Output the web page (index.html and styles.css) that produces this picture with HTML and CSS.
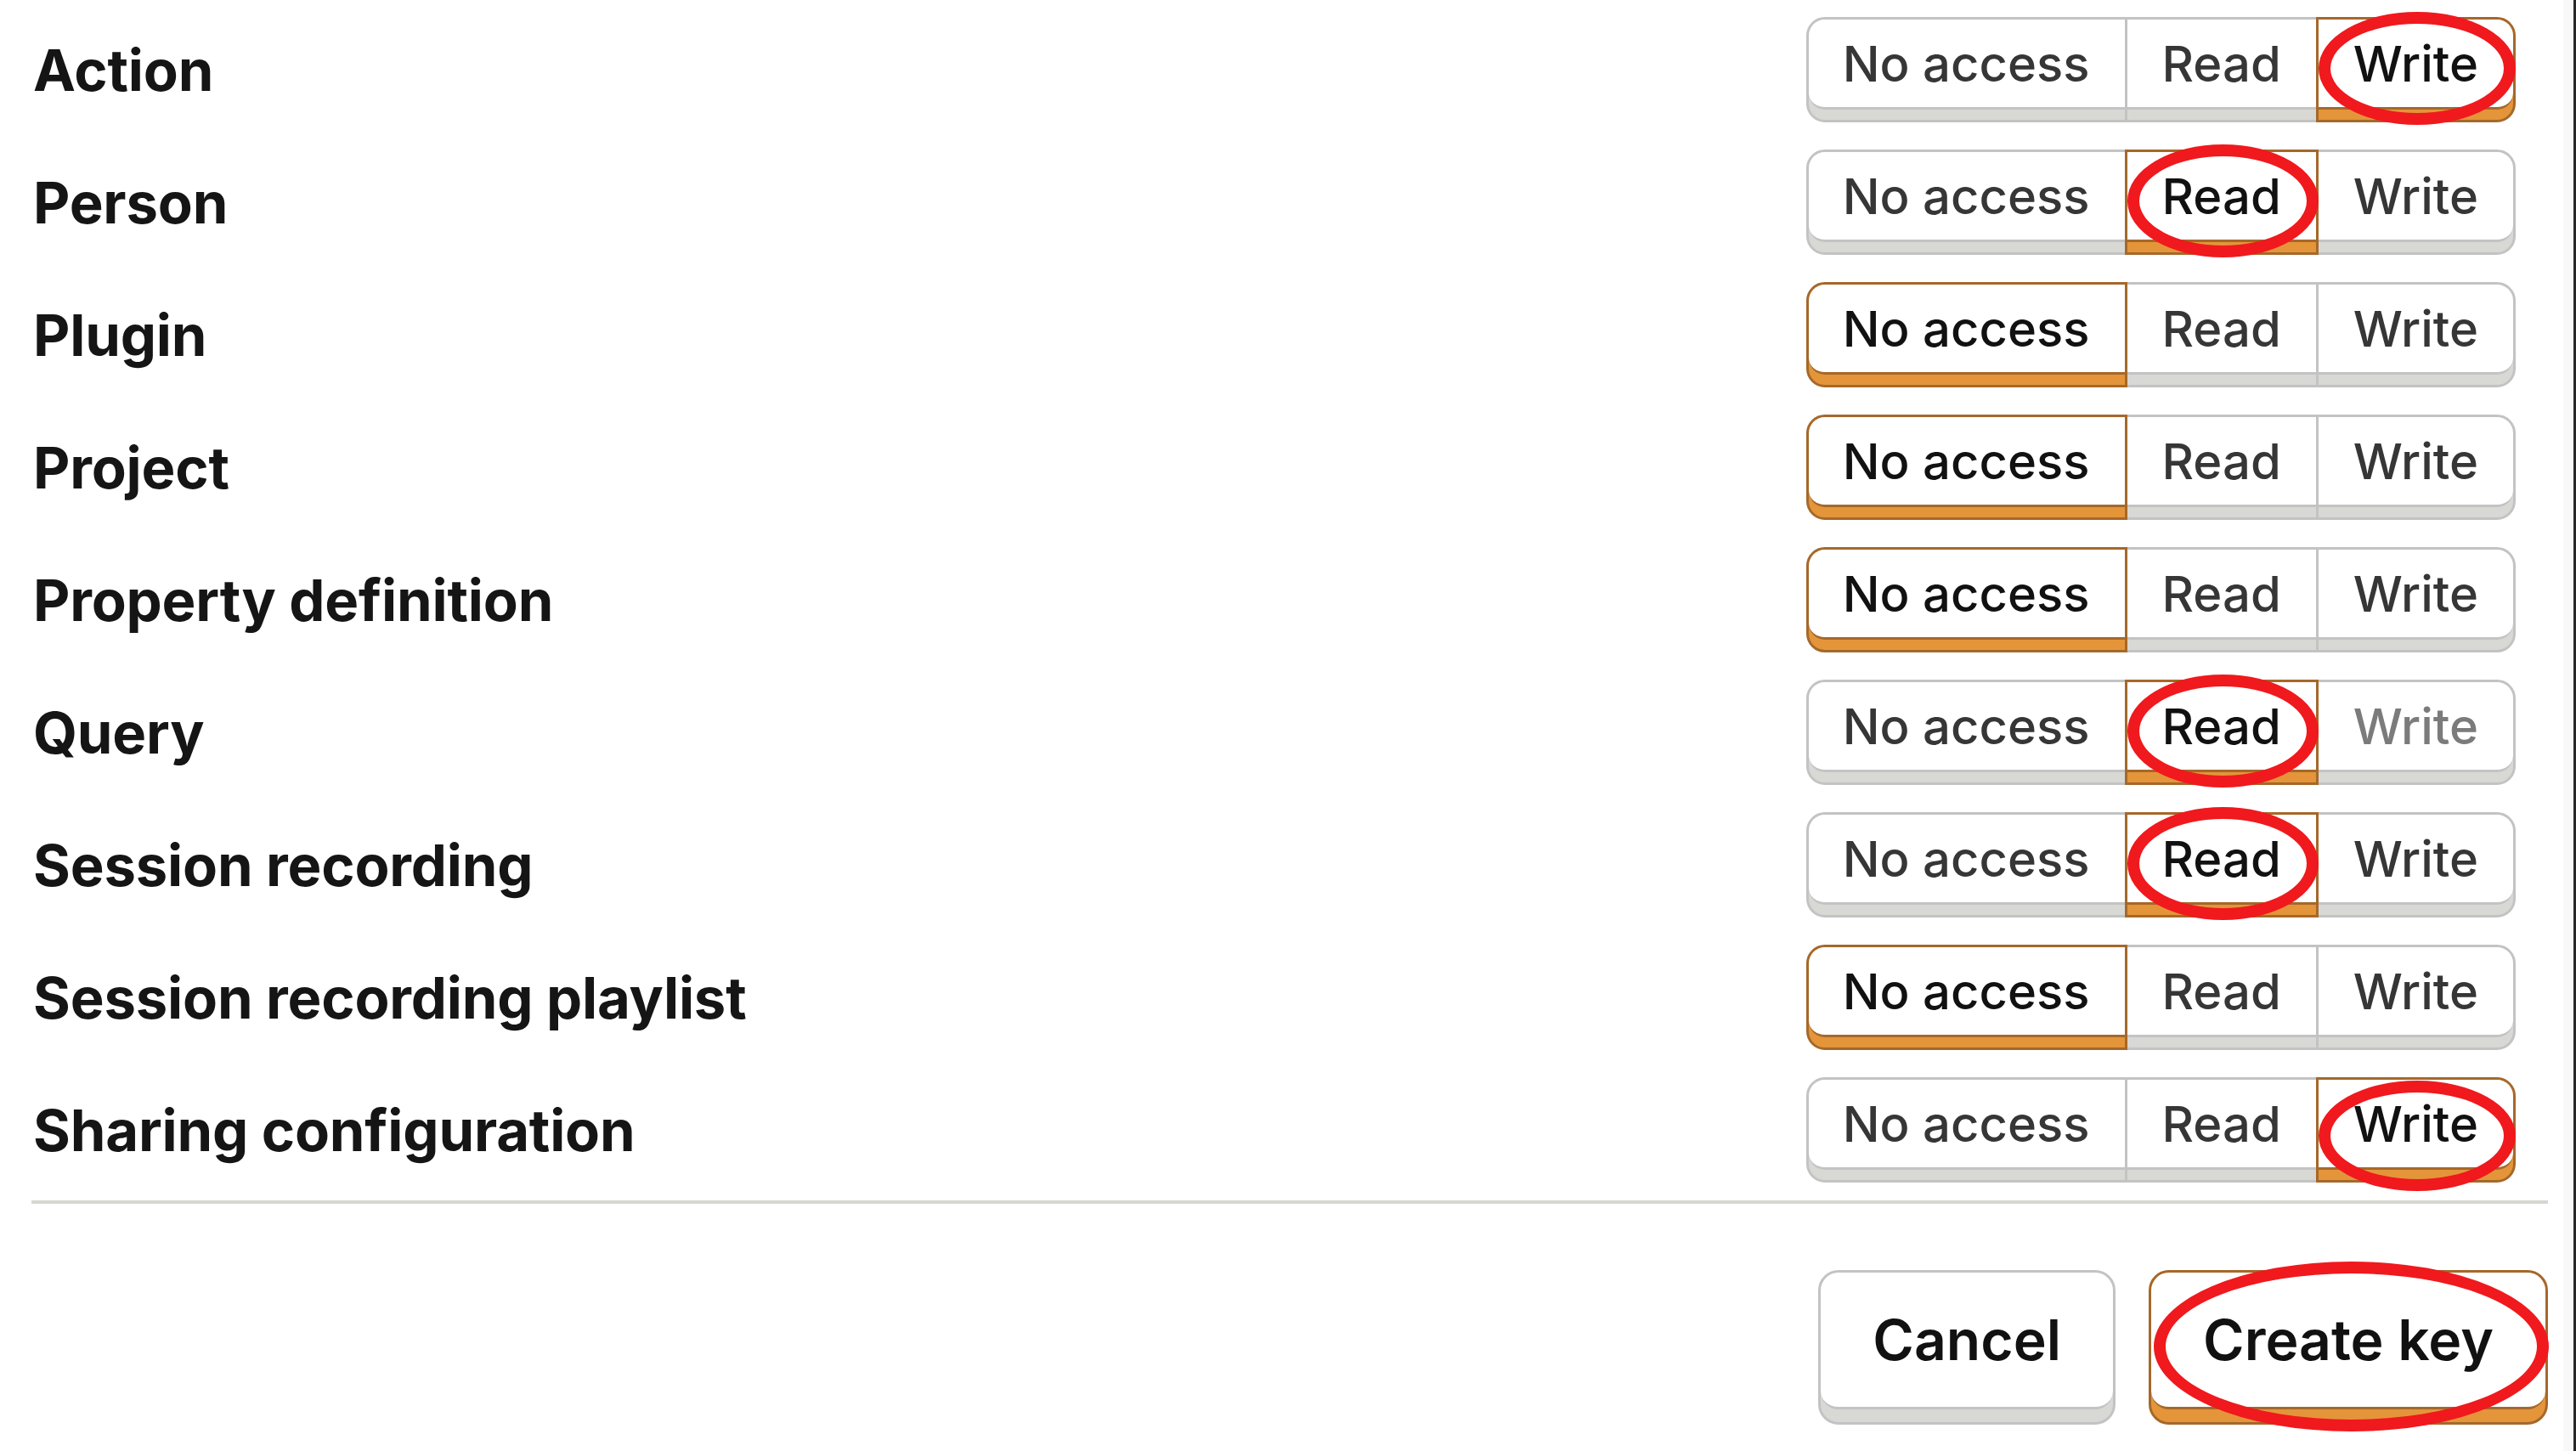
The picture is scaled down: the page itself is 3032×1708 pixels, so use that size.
FILE: index.html
```html
<!DOCTYPE html>
<html lang="en">
<head>
<meta charset="utf-8">
<title>Scopes</title>
<link rel="stylesheet" href="styles.css">
</head>
<body>
<div class="page">
  <div class="scopes">
    <div class="row">
      <span class="label">Action</span>
      <div class="seg">
        <button class="opt"><span class="face">No access</span></button>
        <button class="opt"><span class="face">Read</span></button>
        <button class="opt on"><span class="face">Write</span><span class="mark"></span></button>
      </div>
    </div>
    <div class="row">
      <span class="label">Person</span>
      <div class="seg">
        <button class="opt"><span class="face">No access</span></button>
        <button class="opt on"><span class="face">Read</span><span class="mark"></span></button>
        <button class="opt"><span class="face">Write</span></button>
      </div>
    </div>
    <div class="row">
      <span class="label">Plugin</span>
      <div class="seg">
        <button class="opt on"><span class="face">No access</span></button>
        <button class="opt"><span class="face">Read</span></button>
        <button class="opt"><span class="face">Write</span></button>
      </div>
    </div>
    <div class="row">
      <span class="label">Project</span>
      <div class="seg">
        <button class="opt on"><span class="face">No access</span></button>
        <button class="opt"><span class="face">Read</span></button>
        <button class="opt"><span class="face">Write</span></button>
      </div>
    </div>
    <div class="row">
      <span class="label">Property definition</span>
      <div class="seg">
        <button class="opt on"><span class="face">No access</span></button>
        <button class="opt"><span class="face">Read</span></button>
        <button class="opt"><span class="face">Write</span></button>
      </div>
    </div>
    <div class="row">
      <span class="label">Query</span>
      <div class="seg">
        <button class="opt"><span class="face">No access</span></button>
        <button class="opt on"><span class="face">Read</span><span class="mark"></span></button>
        <button class="opt disabled"><span class="face">Write</span></button>
      </div>
    </div>
    <div class="row">
      <span class="label">Session recording</span>
      <div class="seg">
        <button class="opt"><span class="face">No access</span></button>
        <button class="opt on"><span class="face">Read</span><span class="mark"></span></button>
        <button class="opt"><span class="face">Write</span></button>
      </div>
    </div>
    <div class="row">
      <span class="label">Session recording playlist</span>
      <div class="seg">
        <button class="opt on"><span class="face">No access</span></button>
        <button class="opt"><span class="face">Read</span></button>
        <button class="opt"><span class="face">Write</span></button>
      </div>
    </div>
    <div class="row">
      <span class="label">Sharing configuration</span>
      <div class="seg">
        <button class="opt"><span class="face">No access</span></button>
        <button class="opt"><span class="face">Read</span></button>
        <button class="opt on"><span class="face">Write</span><span class="mark mark-low"></span></button>
      </div>
    </div>
  </div>
  <div class="divider"></div>
  <div class="footer">
    <button class="btn"><span class="btn-face">Cancel</span></button>
    <button class="btn primary"><span class="btn-face">Create key</span><span class="mark mark-btn"></span></button>
  </div>
</div>
</body>
</html>
```

FILE: styles.css
```css
html, body {
  margin: 0;
  padding: 0;
  background: #ffffff;
}

body {
  font-family: "Inter", "Noto Sans", "Liberation Sans", sans-serif;
  color: #151515;
}

.page {
  box-sizing: border-box;
  width: 3032px;
  min-height: 1708px;
  padding: 0 30px 0 37px;
  border-right: 3px solid #262626;
  box-shadow: inset -12px 0 0 #f8f8f8;
}

.scopes {
  display: flex;
  flex-direction: column;
  padding: 4px 38px 0 2px;
}

.row {
  height: 156px;
  display: flex;
  align-items: center;
  justify-content: space-between;
}

.label {
  font-size: 67px;
  font-weight: 700;
  color: #151515;
  letter-spacing: -0.2px;
}

.seg {
  display: flex;
}

.opt {
  position: relative;
  display: flex;
  flex-direction: column;
  margin: 0 0 0 -3px;
  padding: 0 0 12px 0;
  border: 3px solid #c3c3c3;
  background: #d8d8d4;
  font-family: inherit;
  cursor: pointer;
}

.opt:first-child {
  margin-left: 0;
  border-radius: 22px 0 0 22px;
}

.opt:last-child {
  border-radius: 0 22px 22px 0;
}

.face {
  box-sizing: border-box;
  height: 106px;
  display: flex;
  align-items: center;
  justify-content: center;
  padding: 0 41px;
  background: #ffffff;
  border-bottom: 3px solid #c3c3c3;
  font-size: 58px;
  font-weight: 500;
  color: #363636;
  white-space: nowrap;
}

.opt:first-child .face {
  padding-left: 40px;
  border-radius: 19px 0 0 19px;
}

.opt:last-child .face {
  border-radius: 0 19px 19px 0;
}

.opt.on {
  z-index: 1;
  border-color: #a5682a;
  background: #e4953a;
}

.opt.on .face {
  border-bottom-color: #a5682a;
  color: #111111;
}

.opt.disabled .face {
  color: #7b7b7b;
}

.divider {
  height: 4px;
  margin-top: 5px;
  background: #d6d7d1;
}

.footer {
  display: flex;
  justify-content: flex-end;
  gap: 39px;
  padding-top: 78px;
}

.btn {
  position: relative;
  display: flex;
  flex-direction: column;
  margin: 0;
  padding: 0 0 15px 0;
  border: 3px solid #c3c3c3;
  border-radius: 24px;
  background: #d8d8d4;
  font-family: inherit;
  cursor: pointer;
}

.btn-face {
  box-sizing: border-box;
  height: 161px;
  display: flex;
  align-items: center;
  justify-content: center;
  padding: 0 61px;
  background: #ffffff;
  border-bottom: 3px solid #c3c3c3;
  border-radius: 21px;
  font-size: 66px;
  font-weight: 600;
  color: #111111;
  white-space: nowrap;
}

.btn.primary {
  border-color: #a5682a;
  background: #e4953a;
}

.btn.primary .btn-face {
  border-bottom-color: #a5682a;
}

.mark {
  position: absolute;
  top: -9px;
  bottom: -6px;
  left: 0;
  right: -3px;
  border: 14px solid #f0191d;
  border-radius: 50%;
  pointer-events: none;
  z-index: 2;
}

.mark-low {
  top: 1px;
  bottom: -13px;
}

.mark-btn {
  top: -13px;
  bottom: -11px;
  left: 3px;
  right: -4px;
}
```
